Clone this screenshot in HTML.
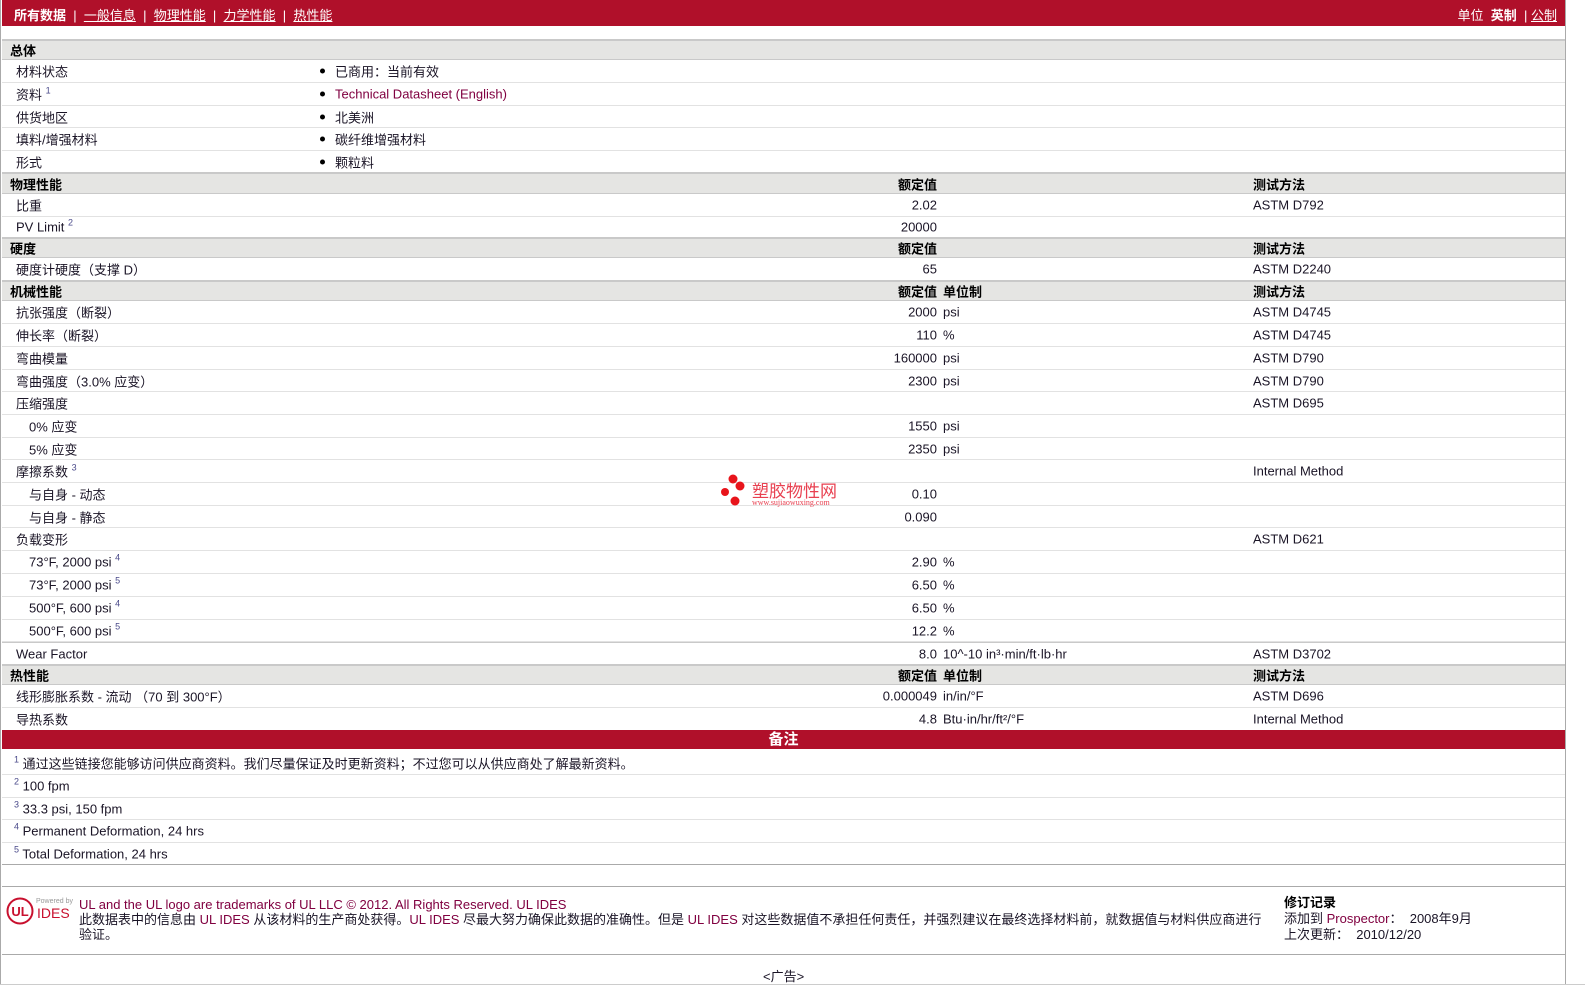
<!DOCTYPE html>
<html><head><meta charset="utf-8"><meta name="viewport" content="width=1585"><style>
*{margin:0;padding:0;box-sizing:border-box}
html,body{margin:0;padding:0;background:#fff}
#w{position:relative;width:1585px;height:996px;overflow:hidden;font-family:"Liberation Sans","Noto Sans CJK SC",sans-serif;font-size:13px;color:#1a1426}
.a{position:absolute}
.bar{left:2px;width:1563px;background:#b0102a;color:#fff}
.r{position:absolute;left:2px;width:1563px;border-bottom:1px solid #e2e2e2;overflow:hidden}
.h{background:#e5e5e3;border-top:2px solid #c9c9c9;border-bottom:1px solid #c9c9c9;font-weight:bold;color:#000}
.r span{position:absolute;top:50%;transform:translateY(-50%);white-space:nowrap}
.l{left:14px}.s{left:27px}.v{right:628px;text-align:right}.u{left:941px}.t{left:1251px}
.b{left:318px;width:5px;height:5px;border-radius:50%;background:#000}
.bt{left:333px}
sup{font-size:9px;color:#4a4a8a;vertical-align:6px;line-height:0}
.lk{color:#800040}
u{text-decoration:underline}
</style></head><body><div id="w">
<div class="a" style="left:0;top:0;width:1px;height:985px;background:#aaa"></div>
<div class="a" style="left:1565px;top:0;width:1px;height:985px;background:#aaa"></div>
<div class="a bar" style="top:0;height:26px;font-size:13px">
<span class="a" style="left:12px;top:5px"><b>所有数据</b> &nbsp;| &nbsp;<u>一般信息</u> &nbsp;| &nbsp;<u>物理性能</u> &nbsp;| &nbsp;<u>力学性能</u> &nbsp;| &nbsp;<u>热性能</u></span>
<span class="a" style="right:8px;top:5px">单位 &nbsp;<b>英制</b> &nbsp;| <u>公制</u></span>
</div>

<div class="r h" style="top:39px;height:21px"><span style="left:8px">总体</span></div>
<div class="r" style="top:60px;height:23px"><span class="l">材料状态</span><span class="b"></span><span class="bt">已商用：当前有效</span></div>
<div class="r" style="top:83px;height:23px"><span class="l">资料 <sup>1</sup></span><span class="b"></span><span class="bt lk">Technical Datasheet (English)</span></div>
<div class="r" style="top:106px;height:22px"><span class="l">供货地区</span><span class="b"></span><span class="bt">北美洲</span></div>
<div class="r" style="top:128px;height:23px"><span class="l">填料/增强材料</span><span class="b"></span><span class="bt">碳纤维增强材料</span></div>
<div class="r" style="top:151px;height:22px"><span class="l">形式</span><span class="b"></span><span class="bt">颗粒料</span></div>

<div class="r h" style="top:172px;height:22px"><span style="left:8px">物理性能</span><span class="v">额定值</span><span class="t">测试方法</span></div>
<div class="r" style="top:194px;height:23px"><span class="l">比重</span><span class="v">2.02</span><span class="t">ASTM D792</span></div>
<div class="r" style="top:217px;height:21px"><span class="l">PV Limit <sup>2</sup></span><span class="v">20000</span></div>
<div class="r h" style="top:237px;height:21px"><span style="left:8px">硬度</span><span class="v">额定值</span><span class="t">测试方法</span></div>
<div class="r" style="top:258px;height:23px"><span class="l">硬度计硬度（支撑 D）</span><span class="v">65</span><span class="t">ASTM D2240</span></div>
<div class="r h" style="top:280px;height:21px"><span style="left:8px">机械性能</span><span class="v">额定值</span><span class="u" style="font-weight:bold">单位制</span><span class="t">测试方法</span></div>
<div class="r" style="top:301px;height:23px"><span class="l">抗张强度（断裂）</span><span class="v">2000</span><span class="u">psi</span><span class="t">ASTM D4745</span></div>
<div class="r" style="top:324px;height:23px"><span class="l">伸长率（断裂）</span><span class="v">110</span><span class="u">%</span><span class="t">ASTM D4745</span></div>
<div class="r" style="top:347px;height:23px"><span class="l">弯曲模量</span><span class="v">160000</span><span class="u">psi</span><span class="t">ASTM D790</span></div>
<div class="r" style="top:370px;height:22px"><span class="l">弯曲强度（3.0% 应变）</span><span class="v">2300</span><span class="u">psi</span><span class="t">ASTM D790</span></div>
<div class="r" style="top:392px;height:23px"><span class="l">压缩强度</span><span class="t">ASTM D695</span></div>
<div class="r" style="top:415px;height:23px"><span class="s">0% 应变</span><span class="v">1550</span><span class="u">psi</span></div>
<div class="r" style="top:438px;height:22px"><span class="s">5% 应变</span><span class="v">2350</span><span class="u">psi</span></div>
<div class="r" style="top:460px;height:23px"><span class="l">摩擦系数 <sup>3</sup></span><span class="t">Internal Method</span></div>
<div class="r" style="top:483px;height:23px"><span class="s">与自身 - 动态</span><span class="v">0.10</span></div>
<div class="r" style="top:506px;height:22px"><span class="s">与自身 - 静态</span><span class="v">0.090</span></div>
<div class="r" style="top:528px;height:23px"><span class="l">负载变形</span><span class="t">ASTM D621</span></div>
<div class="r" style="top:551px;height:23px"><span class="s">73°F, 2000 psi <sup>4</sup></span><span class="v">2.90</span><span class="u">%</span></div>
<div class="r" style="top:574px;height:23px"><span class="s">73°F, 2000 psi <sup>5</sup></span><span class="v">6.50</span><span class="u">%</span></div>
<div class="r" style="top:597px;height:23px"><span class="s">500°F, 600 psi <sup>4</sup></span><span class="v">6.50</span><span class="u">%</span></div>
<div class="r" style="top:620px;height:22px"><span class="s">500°F, 600 psi <sup>5</sup></span><span class="v">12.2</span><span class="u">%</span></div>
<div class="r" style="top:642px;height:23px;border-top:1px solid #c9c9c9"><span class="l">Wear Factor</span><span class="v">8.0</span><span class="u">10^-10 in³·min/ft·lb·hr</span><span class="t">ASTM D3702</span></div>
<div class="r h" style="top:664px;height:21px"><span style="left:8px">热性能</span><span class="v">额定值</span><span class="u" style="font-weight:bold">单位制</span><span class="t">测试方法</span></div>
<div class="r" style="top:685px;height:23px"><span class="l">线形膨胀系数 - 流动 （70 到 300°F）</span><span class="v">0.000049</span><span class="u">in/in/°F</span><span class="t">ASTM D696</span></div>
<div class="r" style="top:708px;height:22px;border:none"><span class="l">导热系数</span><span class="v">4.8</span><span class="u">Btu·in/hr/ft²/°F</span><span class="t">Internal Method</span></div>

<div class="a bar" style="top:730px;height:19px;text-align:center;font-size:15px;font-weight:bold;line-height:19px">备注</div>
<div class="r" style="top:752px;height:23px"><span style="left:12px"><sup>1</sup> 通过这些链接您能够访问供应商资料。我们尽量保证及时更新资料；不过您可以从供应商处了解最新资料。</span></div>
<div class="r" style="top:775px;height:23px"><span style="left:12px"><sup>2</sup> 100 fpm</span></div>
<div class="r" style="top:798px;height:22px"><span style="left:12px"><sup>3</sup> 33.3 psi, 150 fpm</span></div>
<div class="r" style="top:820px;height:23px"><span style="left:12px"><sup>4</sup> Permanent Deformation, 24 hrs</span></div>
<div class="r" style="top:843px;height:22px;border-bottom:1px solid #aaa"><span style="left:12px"><sup>5</sup> Total Deformation, 24 hrs</span></div>
<div class="a" style="left:2px;top:886px;width:1563px;height:1px;background:#aaa"></div>

<svg class="a" style="left:5px;top:896px" width="30" height="30" viewBox="0 0 30 30"><circle cx="15" cy="15" r="12.5" fill="none" stroke="#c8102e" stroke-width="2"/><text x="15" y="20" text-anchor="middle" font-family="Liberation Sans" font-size="13" font-weight="bold" fill="#c8102e">UL</text></svg>
<div class="a" style="left:36px;top:898px;font-size:7px;color:#999">Powered by</div>
<div class="a" style="left:37px;top:905px;font-size:14px;color:#c8102e">IDES</div>
<div class="a" style="left:79px;top:897px;line-height:15px;width:1185px">
<span style="color:#800040">UL and the UL logo are trademarks of UL LLC © 2012. All Rights Reserved. UL IDES</span><br>
此数据表中的信息由 <span class="lk">UL IDES</span> 从该材料的生产商处获得。<span class="lk">UL IDES</span> 尽最大努力确保此数据的准确性。但是 <span class="lk">UL IDES</span> 对这些数据值不承担任何责任，并强烈建议在最终选择材料前，就数据值与材料供应商进行验证。</div>
<div class="a" style="left:1284px;top:895px;line-height:16px"><b style="color:#000">修订记录</b><br>添加到 <span class="lk">Prospector</span>： &nbsp;2008年9月<br>上次更新： &nbsp;2010/12/20</div>
<div class="a" style="left:2px;top:954px;width:1563px;height:1px;background:#aaa"></div>
<div class="a" style="left:763px;top:966px">&lt;广告&gt;</div>
<div class="a" style="left:0;top:984px;width:1585px;height:1px;background:#ccc"></div>

<svg class="a" style="left:720px;top:474px" width="30" height="34"><circle cx="13" cy="5" r="4.5" fill="#e8141b"/><circle cx="20" cy="12" r="4.5" fill="#e8141b"/><circle cx="5" cy="18" r="4" fill="#e8141b"/><circle cx="15" cy="27" r="4.5" fill="#e8141b"/></svg>
<div class="a" style="left:752px;top:480px;font-size:17px;color:#e84050;font-family:'Noto Sans CJK SC',sans-serif;line-height:20px">塑胶物性网</div>
<div class="a" style="left:752px;top:498px;font-size:8px;color:#e84050;font-family:'Liberation Serif',serif">www.sujiaowuxing.com</div>
</div></body></html>
